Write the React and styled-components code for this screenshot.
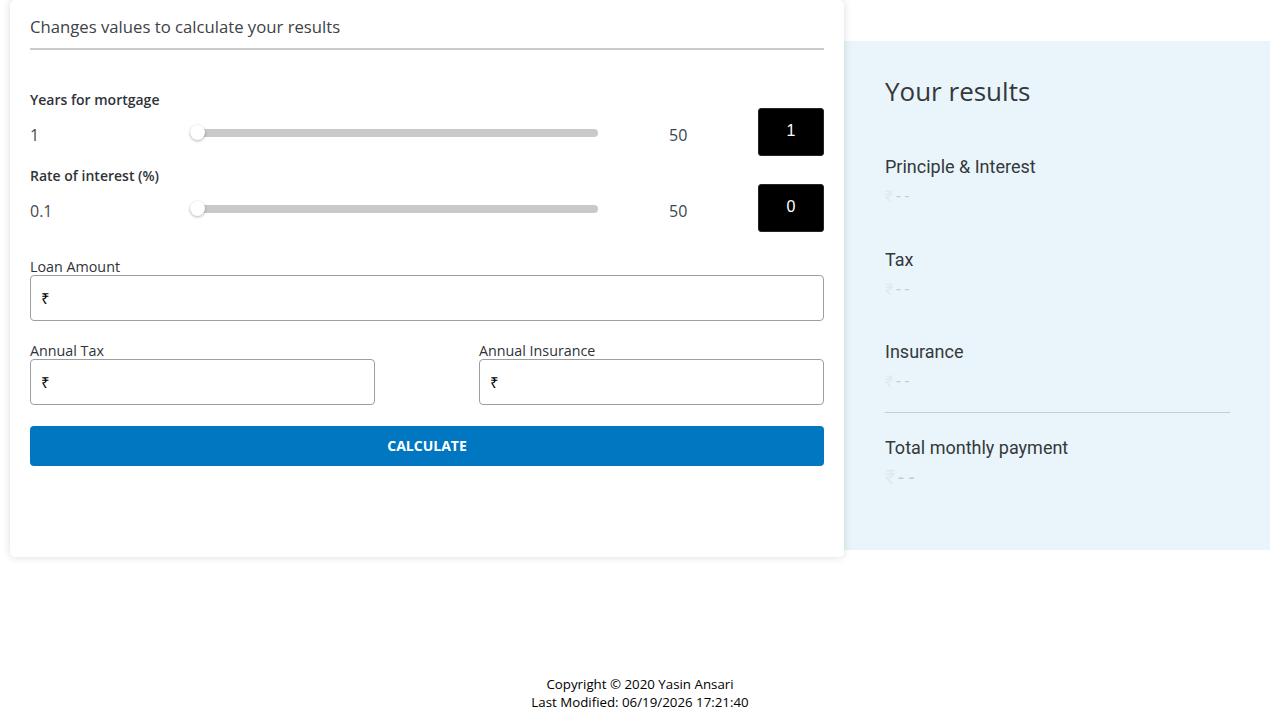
import React from "react";
import styled, { createGlobalStyle } from "styled-components";

const Global = createGlobalStyle`
  html, body { margin: 0; padding: 0; background: #fff; }
  body { font-family: "Open Sans", "Liberation Sans", sans-serif; color: #333; }
  * { box-sizing: border-box; }
`;

const Page = styled.div`
  display: flex;
  align-items: flex-start;
  padding: 0 10px;
`;

const Card = styled.section`
  position: relative;
  z-index: 1;
  width: 834px;
  background: #fff;
  border-radius: 5px;
  box-shadow: 0 0 9px rgba(0, 0, 0, 0.14);
  padding: 16px 20px 91px;
`;

const CardTitle = styled.h2`
  margin: 0;
  font-size: 16.7px;
  font-weight: 400;
  line-height: 22px;
  color: #3d4247;
  padding-bottom: 10px;
  border-bottom: 2px solid #cbcbcb;
`;

const FieldLabel = styled.div`
  font-size: ${(p) => (p.$strong ? 14 : 14.3)}px;
  line-height: 17px;
  font-weight: ${(p) => (p.$strong ? 600 : 400)};
  color: #2f3338;
  margin-top: ${(p) => p.$top}px;
`;

const SliderRow = styled.div`
  display: flex;
  align-items: center;
  height: 48px;
`;

const MinValue = styled.span`
  width: 160px;
  font-size: 16px;
  color: #4a4a4a;
  padding-top: 5px;
`;

const Track = styled.div`
  position: relative;
  width: 408px;
  height: 8px;
  margin-top: 1px;
  border-radius: 4px;
  background: #c9c9c9;
`;

const Thumb = styled.span`
  position: absolute;
  left: 0;
  top: 50%;
  width: 15px;
  height: 15px;
  margin-top: -8px;
  border-radius: 50%;
  background: #fff;
  box-shadow: 0 1px 3px rgba(0, 0, 0, 0.3);
`;

const MaxValue = styled.span`
  margin-left: 71px;
  width: 89px;
  font-size: 16px;
  color: #3a4550;
  padding-top: 5px;
`;

const ValueBox = styled.div`
  width: 66px;
  height: 48px;
  border-radius: 3px;
  background: #000;
  border: 1px solid #2a2226;
  color: #fff;
  font-family: "Liberation Sans", Arial, sans-serif;
  font-size: 16px;
  display: flex;
  align-items: center;
  justify-content: center;
  padding-bottom: 3px;
`;

const TwoCols = styled.div`
  display: grid;
  grid-template-columns: 345px 345px;
  justify-content: space-between;
`;

const InputBox = styled.label`
  display: flex;
  align-items: center;
  height: 46px;
  border: 1px solid #9e9e9e;
  border-radius: 4px;
  padding: 0 10px;
  background: #fff;
`;

const Prefix = styled.span`
  font-size: 15px;
  color: #000;
  margin-right: 4px;
`;

const TextInput = styled.input`
  flex: 1;
  border: none;
  outline: none;
  background: transparent;
  font-family: inherit;
  font-size: 15px;
  color: #000;
  padding: 0;
`;

const CalcButton = styled.button`
  display: block;
  width: 100%;
  height: 40px;
  margin-top: 21px;
  padding: 0 0 2px;
  border: none;
  border-radius: 4px;
  background: #0077c0;
  color: #fff;
  font-family: "Open Sans", "Liberation Sans", sans-serif;
  font-weight: 700;
  font-size: 14px;
  cursor: pointer;
`;

const Results = styled.aside`
  width: 426px;
  margin-top: 41px;
  background: #e9f5fa;
  padding: 33px 40px 60px 41px;
`;

const ResultsTitle = styled.h2`
  margin: 0 0 47px;
  font-size: 26px;
  line-height: 34px;
  font-weight: 400;
  color: #34383c;
`;

const ResultItem = styled.div`
  margin-bottom: ${(p) => p.$gap}px;
`;

const ResultLabel = styled.div`
  font-family: Roboto, "Liberation Sans", sans-serif;
  font-size: 18px;
  line-height: 24px;
  color: #34383c;
`;

const ResultValue = styled.div`
  font-family: Roboto, "Liberation Sans", sans-serif;
  font-size: ${(p) => (p.$big ? 20 : 16)}px;
  line-height: ${(p) => (p.$big ? 26 : 22)}px;
  margin-top: ${(p) => (p.$big ? 4 : 7)}px;
  color: #c6cacc;
  span { color: #e2e8eb; margin-right: 3px; }
`;

const Divider = styled.hr`
  margin: 0 0 23px;
  border: none;
  border-top: 1px solid #c8cbcd;
`;

const Footer = styled.footer`
  margin-top: 118px;
  text-align: center;
  font-size: 13.3px;
  line-height: 18px;
  color: #000;
`;

function Slider({ label, min, max, value, top }) {
  return (
    <>
      <FieldLabel $strong $top={top}>{label}</FieldLabel>
      <SliderRow>
        <MinValue>{min}</MinValue>
        <Track>
          <Thumb />
        </Track>
        <MaxValue>{max}</MaxValue>
        <ValueBox>{value}</ValueBox>
      </SliderRow>
    </>
  );
}

function MoneyField({ label, top }) {
  return (
    <div>
      <FieldLabel $top={top}>{label}</FieldLabel>
      <InputBox>
        <Prefix>₹</Prefix>
        <TextInput type="text" />
      </InputBox>
    </div>
  );
}

function Result({ label, big, gap }) {
  return (
    <ResultItem $gap={gap}>
      <ResultLabel>{label}</ResultLabel>
      <ResultValue $big={big}>
        <span>₹</span>- -
      </ResultValue>
    </ResultItem>
  );
}

export default function App() {
  return (
    <>
      <Global />
      <Page>
        <Card>
          <CardTitle>Changes values to calculate your results</CardTitle>
          <Slider label="Years for mortgage" min="1" max="50" value="1" top={41} />
          <Slider label="Rate of interest (%)" min="0.1" max="50" value="0" top={11} />
          <MoneyField label="Loan Amount" top={26} />
          <TwoCols>
            <MoneyField label="Annual Tax" top={21} />
            <MoneyField label="Annual Insurance" top={21} />
          </TwoCols>
          <CalcButton type="button">CALCULATE</CalcButton>
        </Card>
        <Results>
          <ResultsTitle>Your results</ResultsTitle>
          <Result label="Principle & Interest" gap={40} />
          <Result label="Tax" gap={39} />
          <Result label="Insurance" gap={19} />
          <Divider />
          <Result label="Total monthly payment" big gap={0} />
        </Results>
      </Page>
      <Footer>
        Copyright © 2020 Yasin Ansari
        <br />
        Last Modified: 06/19/2026 17:21:40
      </Footer>
    </>
  );
}
